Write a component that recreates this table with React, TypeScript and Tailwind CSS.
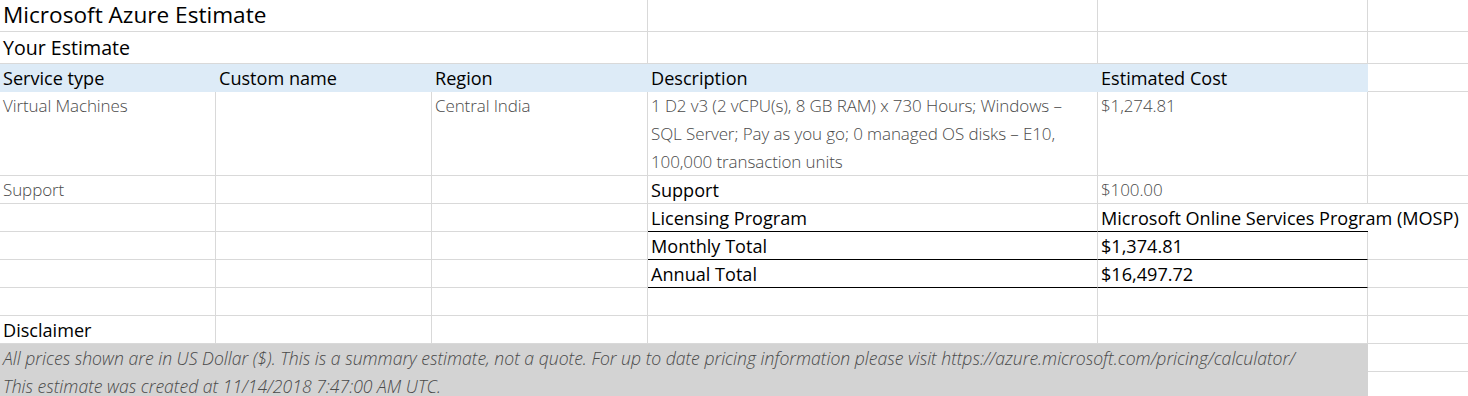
import React from "react";

const FONT = { fontFamily: '"Open Sans", "Noto Sans", sans-serif' };

type CellProps = {
  w: string;
  r?: boolean;
  b?: "grid" | "black" | "none";
  className?: string;
  children?: React.ReactNode;
};

// one spreadsheet cell: right + bottom gridline unless told otherwise
const Cell: React.FunctionComponent<CellProps> = ({ w, r = true, b = "grid", className = "", children }) => {
  const right = r ? "border-r border-r-[#d9d9d9]" : "";
  const bottom = b === "grid" ? "border-b border-b-[#d9d9d9]" : b === "black" ? "border-b border-b-black" : "";
  return <div className={`${w} shrink-0 h-full box-border pl-[3px] whitespace-nowrap ${right} ${bottom} ${className}`}>{children}</div>;
};

const A = "w-[216px]";
const D = "w-[450px]";
const E = "w-[270px]";
const F = "flex-1";
const ABC = "w-[648px]";

const data = "text-[17px] font-light text-[#4a4a4a] leading-[28px] tracking-[-0.1px]";
const label = "text-[18.1px] text-black leading-[28px]";

export default function App() {
  return (
    <div className="w-[1468px] h-[396px] overflow-hidden bg-white" style={FONT}>
      <div className="flex h-[32px]">
        <Cell w={ABC} className="text-[22.6px] leading-[30px] text-black">Microsoft Azure Estimate</Cell>
        <Cell w={D} />
        <Cell w={E} />
        <Cell w={F} r={false} />
      </div>
      <div className="flex h-[32px]">
        <Cell w={ABC} className="text-[19.6px] leading-[31px] text-black">Your Estimate</Cell>
        <Cell w={D} />
        <Cell w={E} />
        <Cell w={F} r={false} />
      </div>
      <div className="flex h-[28px]">
        <div className="flex w-[1368px] bg-[#ddebf7]">
          <Cell w={A} r={false} b="none" className={label}>Service type</Cell>
          <Cell w={A} r={false} b="none" className={label}>Custom name</Cell>
          <Cell w={A} r={false} b="none" className={label}>Region</Cell>
          <Cell w={D} r={false} b="none" className={label}>Description</Cell>
          <Cell w={E} r={false} b="none" className={label}>Estimated Cost</Cell>
        </div>
        <Cell w={F} r={false} />
      </div>
      <div className="flex h-[84px]">
        <Cell w={A} className={data}>Virtual Machines</Cell>
        <Cell w={A} />
        <Cell w={A} className={data}>Central India</Cell>
        <Cell w={D} className={data}>
          1 D2 v3 (2 vCPU(s), 8 GB RAM) x 730 Hours; Windows –<br />
          SQL Server; Pay as you go; 0 managed OS disks – E10,<br />
          100,000 transaction units
        </Cell>
        <Cell w={E} className={data}>$1,274.81</Cell>
        <Cell w={F} r={false} />
      </div>
      <div className="flex h-[28px]">
        <Cell w={A} className={data}>Support</Cell>
        <Cell w={A} />
        <Cell w={A} />
        <Cell w={D} className={label}>Support</Cell>
        <Cell w={E} className={data}>$100.00</Cell>
        <Cell w={F} r={false} />
      </div>
      <div className="flex h-[28px]">
        <Cell w={A} />
        <Cell w={A} />
        <Cell w={A} />
        <Cell w={D} b="black" className={label}>Licensing Program</Cell>
        <Cell w={E} r={false} b="black" className={`${label} overflow-visible relative z-10`}>
          Microsoft Online Services Program (MOSP)
        </Cell>
        <Cell w={F} r={false} b="none" />
      </div>
      <div className="flex h-[28px]">
        <Cell w={A} />
        <Cell w={A} />
        <Cell w={A} />
        <Cell w={D} b="black" className={label}>Monthly Total</Cell>
        <Cell w={E} b="black" className={label}>$1,374.81</Cell>
        <Cell w={F} r={false} />
      </div>
      <div className="flex h-[28px]">
        <Cell w={A} />
        <Cell w={A} />
        <Cell w={A} />
        <Cell w={D} b="black" className={label}>Annual Total</Cell>
        <Cell w={E} b="black" className={label}>$16,497.72</Cell>
        <Cell w={F} r={false} />
      </div>
      <div className="flex h-[28px]">
        <Cell w={A} />
        <Cell w={A} />
        <Cell w={A} />
        <Cell w={D} />
        <Cell w={E} />
        <Cell w={F} r={false} />
      </div>
      <div className="flex h-[28px]">
        <Cell w={A} className={label}>Disclaimer</Cell>
        <Cell w={A} />
        <Cell w={A} />
        <Cell w={D} />
        <Cell w={E} />
        <Cell w={F} r={false} />
      </div>
      <div className="flex h-[56px]">
        <div className="w-[1368px] shrink-0 bg-[#d3d3d3] pl-[3px] text-[17.6px] font-light italic text-[#4a4a4a] leading-[28px] whitespace-nowrap">
          <div>
            All prices shown are in US Dollar ($). This is a summary estimate, not a quote. For up to date pricing information please visit https://azure.microsoft.com/pricing/calculator/
          </div>
          <div>This estimate was created at 11/14/2018 7:47:00 AM UTC.</div>
        </div>
        <div className="flex-1 flex flex-col">
          <div className="h-[28px] border-b border-b-[#d9d9d9]" />
          <div className="h-[28px] border-b border-b-[#d9d9d9]" />
        </div>
      </div>
    </div>
  );
}
